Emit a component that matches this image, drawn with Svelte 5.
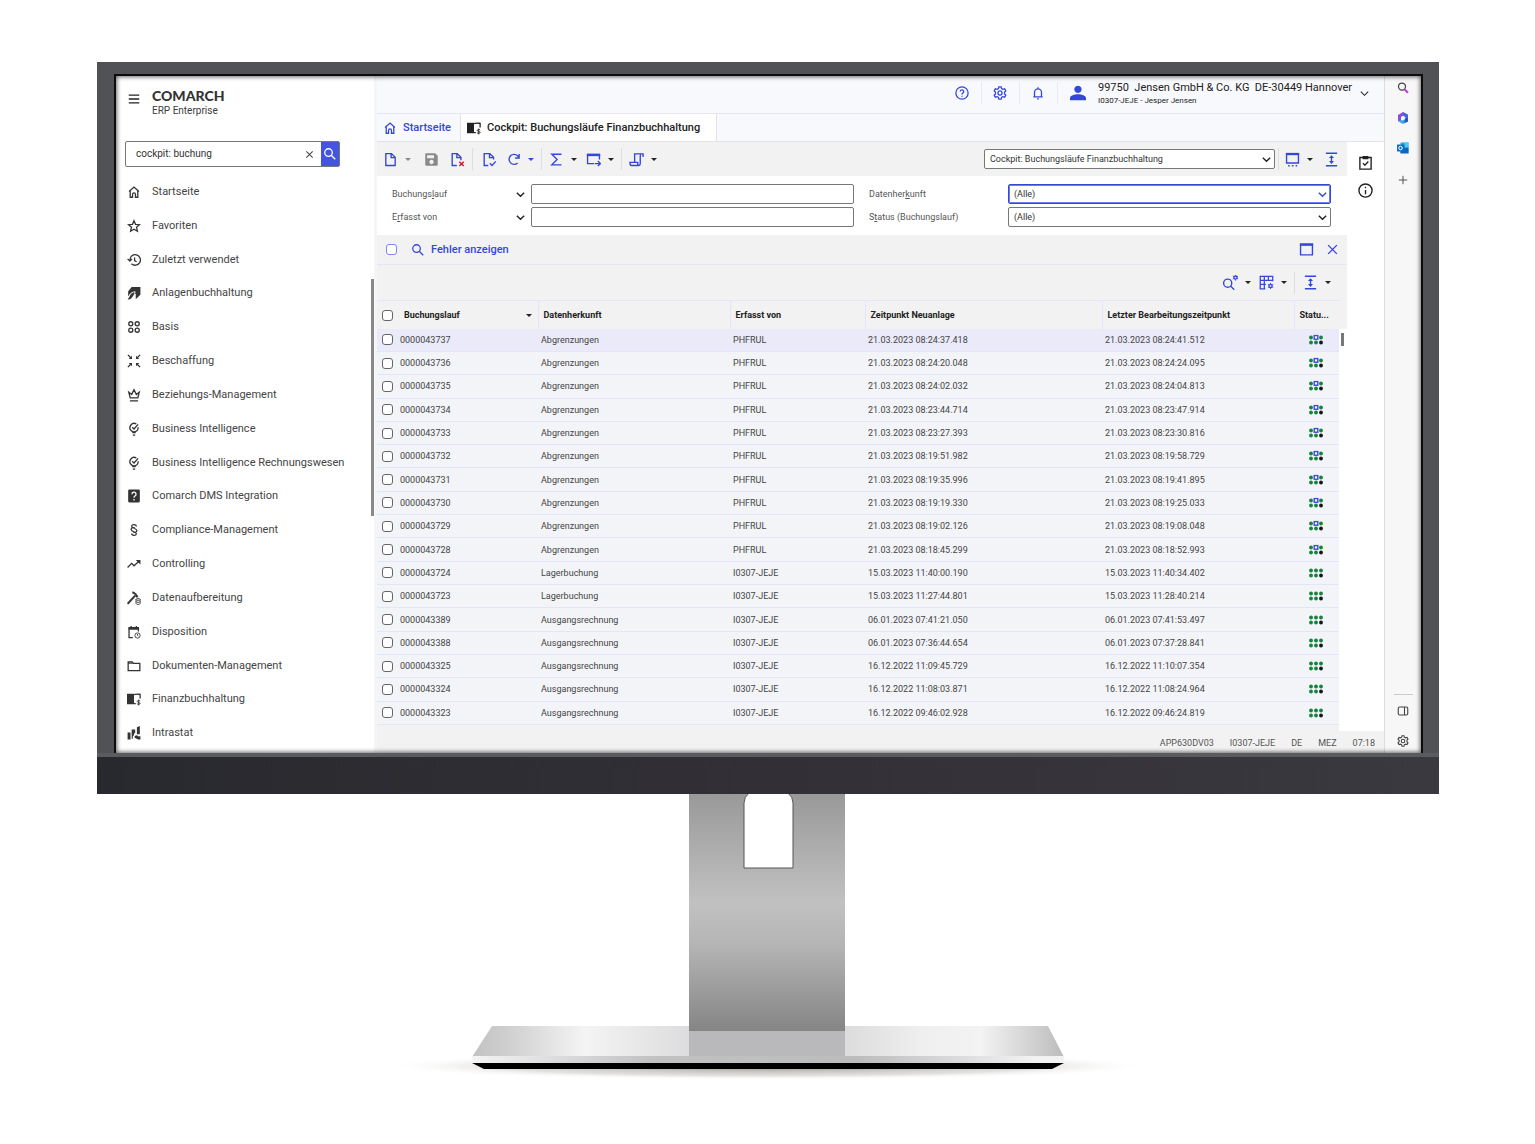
<script lang="ts">
  const icons: Record<string, string> = {
    burger: '<path d="M3 5.500h18M3 12h18M3 18.500h18"/>',
    close: '<path d="M5 5l14 14M19 5L5 19"/>',
    search: '<circle cx="9.500" cy="9.500" r="6.500"/><path d="M14.500 14.500L21 21"/>',
    home: '<path d="M3.500 11L12 3.500l8.500 7.500M5.500 10v11h4v-5a2.500 2.500 0 0 1 5 0v5h4V10"/>',
    star: '<path d="M12 3l2.600 6.200 6.900.6-5.200 4.500 1.600 6.700-5.900-3.600L6.100 21l1.600-6.700-5.200-4.500 6.900-.6z"/>',
    history: '<path d="M5 12a9 9 0 1 1 2.600 6.300M1 10l4 4 3.500-4M13 7.500V13l3.500 2"/>',
    assets: '<path fill="currentColor" stroke="none" d="M8 1.500h15V15l-8 7.500v-9h-2c-1.500 4-4 6.500-8 9l-4 .5 3-4c1-3 3-5 5-6.500-2.500 1-5 2.500-7 5V9z"/><path stroke="#fff" stroke-width="1.500" d="M4 15c3-3 6-5 10-5-1 5-3 8-6 11"/>',
    basis: '<circle cx="6.500" cy="6.500" r="3.500"/><circle cx="17.500" cy="6.500" r="3.500"/><circle cx="6.500" cy="17.500" r="3.500"/><circle cx="17.500" cy="17.500" r="3.500"/>',
    inward: '<path d="M1.500 1.500l5 5M22.500 1.500l-5 5M1.500 22.500l5-5M22.500 22.500l-5-5"/><path fill="currentColor" stroke="none" d="M8.500 3v5.500H3zM15.500 3v5.500H21zM8.500 21v-5.500H3zM15.500 21v-5.500H21z"/>',
    crown: '<path d="M5.500 17L3 7l5 4 4-8 4 8 5-4-2.500 10zM5 22h14"/>',
    bulb: '<path d="M16 3.500A7.200 7.200 0 1 0 16.500 15.500 7 7 0 0 0 19 9M9 9l3 3 7-8M9 18h6M10 22.500h4"/>',
    dms: '<path fill="currentColor" stroke="none" d="M4 1h16a2 2 0 0 1 2 2v18a2 2 0 0 1-2 2H4a2 2 0 0 1-2-2V3a2 2 0 0 1 2-2z"/><path stroke="#fff" d="M8.500 9a3.500 3.500 0 1 1 5.200 3c-1.200.8-1.700 1.300-1.700 3M12 17v2.500"/>',
    section: '<path d="M16 6c0-4-8-4-8-.5 0 3.500 9 3.500 9 7.500 0 3.500-5 3.500-6.500 2.500M8 18c0 4 8 4 8 .5 0-3.500-9-3.500-9-7.500 0-3.500 5-3.500 6.500-2.500"/>',
    trend: '<path d="M1 18l7-7 4 4 9-8"/><path fill="currentColor" stroke="none" d="M15 5h8v8z"/>',
    hammer: '<path stroke-width="3.500" d="M1 22L14 8"/><path stroke-width="3.500" d="M9 2.500c4 0 6 2 9 8.500"/><g stroke-width="1.500"><ellipse cx="19" cy="14.500" rx="3.500" ry="1.500"/><path d="M15.500 14.500v7c0 2 7 2 7 0v-7M15.500 18c0 2 7 2 7 0"/></g>',
    calendar: '<path d="M10 21.500H3.500V4.500h16V11M7 1.500v3M16 1.500v3"/><path fill="currentColor" d="M4 5h15v2H4z"/><g stroke-width="1.500"><circle cx="18" cy="18" r="4.500"/><path d="M18 15.500V18l1.500 1"/></g>',
    folder: '<path d="M2 5h7l2 2.500h11v12.500H2z"/><path d="M2 7h8"/>',
    ledger: '<path fill="currentColor" stroke="none" d="M0 3h12v18H0z"/><path d="M12 20h3M12 5c2-2 5-1.500 10.500-1V11"/><path stroke-width="1.500" d="M22.500 15.500c-1.500-1.500-5-1-5 .8s5 1.400 5 3.200-3.500 2.500-5.500.5M20 13v10"/>',
    intrastat: '<path fill="currentColor" stroke="none" d="M1 11h5v12H1zM8 6h6v6l-2 1v3l-2 1v5H8zM17 2l5-2v14h-5zM13 17l4-1 3 2 3-1v6h-4l-4-2-2-1z"/>',
    doc: '<path d="M4.500 2.500h9l6 6v13h-15zM13 2.500V9h6.500"/>',
    save: '<path fill="currentColor" stroke="none" fill-rule="evenodd" d="M3 2h15l4 4v14a2 2 0 0 1-2 2H4a2 2 0 0 1-2-2V4a2 2 0 0 1 1-2zM5 5v5h11V5zM12 12.500a3.500 3.500 0 1 0 .1 0z"/>',
    docDelete: '<path d="M11 21.500H3.500v-19h8l6 6V13M11 2.500V9h6.500"/><path stroke="#d8102c" d="M15 15.500l7 7M22 15.500l-7 7"/>',
    docCheck: '<path d="M10 21.500H3.500v-19h9l6 6V12M12 2.500V9h6.500"/><path d="M12.500 18l3.500 3.500 6-6.500"/>',
    refresh: '<path d="M18.500 17.500a8 8 0 1 1 0-11.500l2 2M21 3v6.500h-6.500"/>',
    sum: '<path d="M20 3.500H4.500L13 12l-8.500 8.500H20"/>',
    windowArrow: '<path d="M13 18.500H2.500V4h19v8"/><path fill="currentColor" d="M2.500 4h19v1.500h-19z"/><path d="M14 18.500h8M19 14.500l4 4-4 4"/>',
    script: '<path d="M22.500 8V3H9v13M22.500 3H20c-1.500 0-2 1-2 3v12c0 2-1 3.500-3 3.500H4c-1.500 0-2.500-1-2.500-5H14v5"/>',
    windowDots: '<path d="M2.500 2.500h19v15h-19z"/><path fill="currentColor" d="M2.500 2.500h19v1.500h-19z"/><path d="M5 22h2.500M11 22h2.500M17 22h2.500"/>',
    window: '<path d="M2.500 3.500h19v17h-19z"/><path fill="currentColor" d="M2.500 3.500h19v1.500h-19z"/>',
    expand: '<path d="M3 2h18M3 22h18M12 7v10"/><path fill="currentColor" stroke="none" d="M8 9.500l4-4.500 4 4.500zM8 14.500l4 4.500 4-4.500z"/>',
    searchGear: '<circle cx="7.500" cy="13" r="6.500"/><path d="M12 17.500l6 6"/><circle cx="20" cy="4" r="2.500"/><path stroke-width="1.500" d="M20 -1v2M20 7v2M15.700 1.500l1.700 1M22.600 5.500l1.700 1M15.700 6.500l1.700-1M22.600 2.500l1.700-1"/>',
    tableGear: '<path stroke-width="2" d="M10 22H2V2h20v8M2 8.500h20M2 15h9M8.500 2v20M15 2v7"/><circle cx="18.500" cy="17.500" r="2.500"/><path stroke-width="1.500" d="M18.500 12.500v2M18.500 20.500v2M14.200 15l1.700 1M21.100 19l1.700 1M14.200 20l1.700-1M21.100 16l1.700-1"/>',
    help: '<circle cx="12" cy="12" r="10.500"/><path d="M9 9.500a3 3 0 1 1 4.400 2.700c-1 .7-1.400 1.200-1.400 2.300M12 16.500v2"/>',
    gear: '<path d="M10 1.500h4l.7 3 2.200 1.200 3.100-.9 2 3.500-2.200 2.200v3l2.200 2.200-2 3.500-3.100-.9-2.200 1.200-.7 3h-4l-.7-3-2.200-1.200-3.100.9-2-3.500 2.200-2.200v-3L2 8.300l2-3.500 3.100.9 2.200-1.200z"/><circle cx="12" cy="12" r="3.500"/>',
    bell: '<path d="M4 18.500h16M6 18.500V11a6 6 0 0 1 12 0v7.500M12 2v3"/><path d="M10.500 22h3"/>',
    user: '<path fill="currentColor" stroke="none" d="M12 1a5.500 5.500 0 1 1-.1 0zM0 23v-3c0-4.500 7-6 12-6s12 1.500 12 6v3z"/>',
    chevron: '<path d="M4 8l8 8 8-8"/>',
    clipboard: '<path d="M3 4h18v18.500H3zM8 13l3 3.500 5.500-6"/><path fill="currentColor" d="M8.500 2.500h7v3h-7z"/>',
    info: '<circle cx="12" cy="12" r="10.500"/><path d="M12 11v7M12 6v2.500"/>',
    plus: '<path d="M12 2v20M2 12h20"/>',
    panel: '<rect x="2.500" y="4" width="19" height="16" rx="3"/><path d="M15 4v16"/>',
  };

  const menu = [
    ["home", "Startseite"],
    ["star", "Favoriten"],
    ["history", "Zuletzt verwendet"],
    ["assets", "Anlagenbuchhaltung"],
    ["basis", "Basis"],
    ["inward", "Beschaffung"],
    ["crown", "Beziehungs-Management"],
    ["bulb", "Business Intelligence"],
    ["bulb", "Business Intelligence Rechnungswesen"],
    ["dms", "Comarch DMS Integration"],
    ["section", "Compliance-Management"],
    ["trend", "Controlling"],
    ["hammer", "Datenaufbereitung"],
    ["calendar", "Disposition"],
    ["folder", "Dokumenten-Management"],
    ["ledger", "Finanzbuchhaltung"],
    ["intrastat", "Intrastat"],
  ];

  const rows = [
    ["0000043737", "Abgrenzungen", "PHFRUL", "21.03.2023 08:24:37.418", "21.03.2023 08:24:41.512"],
    ["0000043736", "Abgrenzungen", "PHFRUL", "21.03.2023 08:24:20.048", "21.03.2023 08:24:24.095"],
    ["0000043735", "Abgrenzungen", "PHFRUL", "21.03.2023 08:24:02.032", "21.03.2023 08:24:04.813"],
    ["0000043734", "Abgrenzungen", "PHFRUL", "21.03.2023 08:23:44.714", "21.03.2023 08:23:47.914"],
    ["0000043733", "Abgrenzungen", "PHFRUL", "21.03.2023 08:23:27.393", "21.03.2023 08:23:30.816"],
    ["0000043732", "Abgrenzungen", "PHFRUL", "21.03.2023 08:19:51.982", "21.03.2023 08:19:58.729"],
    ["0000043731", "Abgrenzungen", "PHFRUL", "21.03.2023 08:19:35.996", "21.03.2023 08:19:41.895"],
    ["0000043730", "Abgrenzungen", "PHFRUL", "21.03.2023 08:19:19.330", "21.03.2023 08:19:25.033"],
    ["0000043729", "Abgrenzungen", "PHFRUL", "21.03.2023 08:19:02.126", "21.03.2023 08:19:08.048"],
    ["0000043728", "Abgrenzungen", "PHFRUL", "21.03.2023 08:18:45.299", "21.03.2023 08:18:52.993"],
    ["0000043724", "Lagerbuchung", "I0307-JEJE", "15.03.2023 11:40:00.190", "15.03.2023 11:40:34.402"],
    ["0000043723", "Lagerbuchung", "I0307-JEJE", "15.03.2023 11:27:44.801", "15.03.2023 11:28:40.214"],
    ["0000043389", "Ausgangsrechnung", "I0307-JEJE", "06.01.2023 07:41:21.050", "06.01.2023 07:41:53.497"],
    ["0000043388", "Ausgangsrechnung", "I0307-JEJE", "06.01.2023 07:36:44.654", "06.01.2023 07:37:28.841"],
    ["0000043325", "Ausgangsrechnung", "I0307-JEJE", "16.12.2022 11:09:45.729", "16.12.2022 11:10:07.354"],
    ["0000043324", "Ausgangsrechnung", "I0307-JEJE", "16.12.2022 11:08:03.871", "16.12.2022 11:08:24.964"],
    ["0000043323", "Ausgangsrechnung", "I0307-JEJE", "16.12.2022 09:46:02.928", "16.12.2022 09:46:24.819"],
  ];

  let query = $state("cockpit: buchung");
  let selected = $state("0000043737");
</script>

{#snippet icon(name: string)}
  <svg class="icon" viewBox="0 0 24 24" stroke-width="2.200" aria-hidden="true">{@html icons[name]}</svg>
{/snippet}

{#snippet caret(label: string)}
  <button type="button" class="caret" aria-label={label}></button>
{/snippet}

{#snippet tool(name: string, label: string)}
  <button type="button" class="tool" aria-label={label}>{@render icon(name)}</button>
{/snippet}

<div class="page">
  <div class="monitor">
    <div class="screen">
      <aside class="sidebar">
        <div class="brand">
          <button type="button" class="burger" aria-label="Menü">{@render icon("burger")}</button>
          <div>
            <div class="logo">COMARCH</div>
            <div class="product">ERP Enterprise</div>
          </div>
        </div>
        <form class="search" onsubmit={(e) => e.preventDefault()}>
          <input type="text" aria-label="Suche" bind:value={query} />
          <button type="button" class="clear" aria-label="Leeren" onclick={() => (query = "")}>
            {@render icon("close")}
          </button>
          <button type="submit" class="go" aria-label="Suchen">{@render icon("search")}</button>
        </form>
        <nav class="menu">
          {#each menu as [name, label]}
            <a href="#{name}">{@render icon(name)}<span>{label}</span></a>
          {/each}
        </nav>
        <div class="menu-thumb"></div>
      </aside>

      <main class="app">
        <header class="topbar">
          <button type="button" class="top" aria-label="Hilfe">{@render icon("help")}</button>
          <button type="button" class="top" aria-label="Einstellungen">{@render icon("gear")}</button>
          <button type="button" class="top" aria-label="Meldungen">{@render icon("bell")}</button>
          <button type="button" class="account">
            {@render icon("user")}
            <span class="who">
              <span class="company">99750&nbsp; Jensen GmbH &amp; Co. KG&nbsp; DE-30449 Hannover</span>
              <span class="login">I0307-JEJE - Jesper Jensen</span>
            </span>
            <span class="open">{@render icon("chevron")}</span>
          </button>
        </header>

        <nav class="tabs">
          <a href="#start" class="tab">{@render icon("home")}Startseite</a>
          <a href="#cockpit" class="tab active">{@render icon("ledger")}Cockpit: Buchungsläufe Finanzbuchhaltung</a>
        </nav>

        <div class="work">
          <section class="cockpit">
            <div class="toolbar">
              <div class="group">
                <span class="split">{@render tool("doc", "Neu")}{@render caret("Neu, weitere")}</span>
                {@render tool("save", "Speichern")}
                {@render tool("docDelete", "Löschen")}
              </div>
              <div class="group checks">
                {@render tool("docCheck", "Prüfen")}
                <span class="split">{@render tool("refresh", "Aktualisieren")}{@render caret("Aktualisieren, weitere")}</span>
              </div>
              <div class="group dark">
                <span class="split">{@render tool("sum", "Summe")}{@render caret("Summe, weitere")}</span>
                <span class="split">{@render tool("windowArrow", "Öffnen")}{@render caret("Öffnen, weitere")}</span>
              </div>
              <div class="group dark">
                <span class="split">{@render tool("script", "Skript")}{@render caret("Skript, weitere")}</span>
              </div>
              <div class="select view">
                <select aria-label="Ansicht"><option>Cockpit: Buchungsläufe Finanzbuchhaltung</option></select>
                {@render icon("chevron")}
              </div>
              <div class="group dark last">
                <span class="split">{@render tool("windowDots", "Fenster")}{@render caret("Fenster, weitere")}</span>
                {@render tool("expand", "Höhe anpassen")}
              </div>
            </div>

            <div class="filters">
              <div class="field">
                <label for="run">Buchungs<u>l</u>auf</label>
                <button type="button" class="operator" aria-label="Operator">{@render icon("chevron")}</button>
                <input id="run" type="text" />
              </div>
              <div class="field">
                <label for="origin">Datenher<u>k</u>unft</label>
                <div class="select focus">
                  <select id="origin"><option>(Alle)</option></select>
                  {@render icon("chevron")}
                </div>
              </div>
              <div class="field">
                <label for="author">E<u>r</u>fasst von</label>
                <button type="button" class="operator" aria-label="Operator">{@render icon("chevron")}</button>
                <input id="author" type="text" />
              </div>
              <div class="field">
                <label for="status">S<u>t</u>atus (Buchungslauf)</label>
                <div class="select">
                  <select id="status"><option>(Alle)</option></select>
                  {@render icon("chevron")}
                </div>
              </div>
            </div>

            <div class="errors">
              <input type="checkbox" class="blue" id="errors" />
              <label for="errors">{@render icon("search")}Fehler anzeigen</label>
              <div class="errors-end">
                {@render tool("window", "Maximieren")}
                {@render tool("close", "Schließen")}
              </div>
            </div>

            <div class="table-tools dark">
              <span class="split">{@render tool("searchGear", "Suche")}{@render caret("Suche, weitere")}</span>
              <span class="split">{@render tool("tableGear", "Spalten")}{@render caret("Spalten, weitere")}</span>
              <span class="split divided">{@render tool("expand", "Zeilenhöhe")}{@render caret("Zeilenhöhe, weitere")}</span>
            </div>

            <div class="list">
              <table>
                <colgroup>
                  <col class="c-run" />
                  <col class="c-origin" />
                  <col class="c-author" />
                  <col />
                  <col class="c-origin" />
                  <col class="c-status" />
                </colgroup>
                <thead>
                  <tr>
                    <th>
                      <div class="run">
                        <input type="checkbox" aria-label="Alle auswählen" />
                        <span class="head">Buchungslauf</span>
                        <span class="sort"></span>
                      </div>
                    </th>
                    <th>Datenherkunft</th>
                    <th>Erfasst von</th>
                    <th>Zeitpunkt Neuanlage</th>
                    <th>Letzter Bearbeitungszeitpunkt</th>
                    <th>Statu...</th>
                  </tr>
                </thead>
                <tbody>
                  {#each rows as row}
                    <tr class:selected={row[0] === selected} onclick={() => (selected = row[0])}>
                      <td>
                        <div class="run">
                          <input type="checkbox" aria-label={row[0]} />
                          <span>{row[0]}</span>
                        </div>
                      </td>
                      {#each row.slice(1) as cell}
                        <td>{cell}</td>
                      {/each}
                      <td class="state">
                        <svg viewBox="0 0 14 10" aria-hidden="true">
                          <g fill="#14843c">
                            <circle cx="2" cy="2.500" r="1.900" />
                            {#if row[1] !== "Abgrenzungen"}
                              <circle cx="7" cy="2.500" r="1.900" />
                            {/if}
                            <circle cx="12" cy="2.500" r="1.900" />
                            <circle cx="2" cy="7.500" r="1.900" />
                            <circle cx="7" cy="7.500" r="1.900" />
                          </g>
                          <circle cx="12" cy="7.500" r="1.900" fill="#15151c" />
                          {#if row[1] === "Abgrenzungen"}
                            <rect x="5.200" y="0.600" width="3.600" height="3.600" fill="#fff" stroke="#3b4be0" stroke-width="1.400" />
                          {/if}
                        </svg>
                      </td>
                    </tr>
                  {/each}
                </tbody>
              </table>
              <div class="list-scroll"><div class="list-thumb"></div></div>
            </div>
          </section>

          <div class="side-tools">
            {@render tool("clipboard", "Aufgaben")}
            {@render tool("info", "Info")}
          </div>
        </div>

        <footer class="status">
          <span>APP630DV03</span>
          <span>I0307-JEJE</span>
          <span>DE</span>
          <span>MEZ</span>
          <span>07:18</span>
        </footer>
      </main>

      <aside class="edge">
        <button type="button" aria-label="Suchen">
          <svg class="icon" viewBox="0 0 24 24" stroke-width="2.500" aria-hidden="true">
            <circle cx="10" cy="9" r="7" />
            <path stroke="#c03be0" stroke-width="4" d="M15 14.500l7 7" />
          </svg>
        </button>
        <button type="button" aria-label="Microsoft 365">
          <svg viewBox="0 0 24 24" aria-hidden="true">
            <path fill="#4b62dc" d="M12 0l10 5v7l-6 1-1-4-4-2z" />
            <path fill="#8a4fd8" d="M12 0L2 6v12l6 3V10l5-3z" />
            <path fill="#38a8e8" d="M2 18l10 6 10-5v-8l-6-1v4l-5 3-4-1z" />
            <path fill="#3050c4" d="M16 13l6-3v9l-7 3z" />
            <circle cx="12" cy="12" r="3.500" fill="#f7f7f7" />
          </svg>
        </button>
        <button type="button" aria-label="Outlook">
          <svg viewBox="0 0 24 24" aria-hidden="true">
            <path fill="#2aa3e6" d="M7 1h16v21H7z" />
            <path fill="#52c8f5" d="M15 1h8v10h-8z" />
            <path fill="#0f66b8" d="M7 13l16-2v12H7z" />
            <rect y="5" width="15" height="14" rx="1" fill="#0b6fc6" />
            <circle cx="7" cy="12" r="3.500" fill="none" stroke="#fff" stroke-width="2" />
          </svg>
        </button>
        <button type="button" class="add" aria-label="Hinzufügen">{@render icon("plus")}</button>
        <div class="edge-end">
          <button type="button" aria-label="Seitenleiste">{@render icon("panel")}</button>
          <button type="button" aria-label="Einstellungen">{@render icon("gear")}</button>
        </div>
      </aside>
    </div>
    <div class="chin"></div>
  </div>

  <svg class="stand" viewBox="0 0 780 300" aria-hidden="true">
    <defs>
      <linearGradient id="neck" x1="0" y1="0" x2="0" y2="1">
        <stop offset="0" stop-color="#999" />
        <stop offset="0.460" stop-color="#c1c1c1" />
        <stop offset="0.640" stop-color="#b4b4b4" />
        <stop offset="1" stop-color="#858585" />
      </linearGradient>
      <linearGradient id="plate">
        <stop offset="0" stop-color="#c2c2c2" />
        <stop offset="0.060" stop-color="#cfcfcf" />
        <stop offset="0.190" stop-color="#f4f4f4" />
        <stop offset="0.370" stop-color="#dcdcde" />
        <stop offset="0.630" stop-color="#dcdcdc" />
        <stop offset="0.760" stop-color="#efefef" />
        <stop offset="0.860" stop-color="#f3f3f3" />
        <stop offset="1" stop-color="#bcbcbc" />
      </linearGradient>
      <linearGradient id="rim">
        <stop offset="0" stop-color="#f4f4f4" />
        <stop offset="0.300" stop-color="#c2c2c2" />
        <stop offset="0.650" stop-color="#bcbcbc" />
        <stop offset="0.950" stop-color="#f2f2f2" />
      </linearGradient>
      <radialGradient id="shade">
        <stop offset="0" stop-color="#8a867c" stop-opacity="0.900" />
        <stop offset="0.700" stop-color="#b8b5ae" stop-opacity="0.400" />
        <stop offset="1" stop-color="#fff" stop-opacity="0" />
      </radialGradient>
    </defs>
    <ellipse cx="390" cy="272" rx="385" ry="14" fill="url(#shade)" />
    <path fill="url(#plate)" d="M114 232h556l16 31H94z" />
    <path fill="#b9b9bb" d="M311 236h156v26H311z" />
    <path fill="url(#neck)" d="M311 0h156v237H311z" />
    <path fill="#fff" stroke="#555" d="M371 -1q-5 4-5 10v65h49V9q0-6-5-10z" />
    <path fill="url(#rim)" d="M94 262h592v7H94z" />
    <path d="M94 269h592l-12 6H106z" />
  </svg>
</div>

<style>
  :global(body) {
    background: #fff;
  }

  .page {
    padding: 62px 96px 0 97px;
    font-family: Roboto, "Liberation Sans", sans-serif;
    font-size: 11px;
    line-height: 12px;
    color: #444;
  }

  button {
    display: flex;
    align-items: center;
    justify-content: center;
    padding: 0;
    border: 0;
    background: none;
    color: inherit;
    font: inherit;
    cursor: pointer;
  }

  input,
  select {
    box-sizing: border-box;
    margin: 0;
    font: inherit;
    font-size: 10px;
    color: #333;
  }

  a {
    color: inherit;
    text-decoration: none;
  }

  .icon {
    display: block;
    flex: none;
    width: 14px;
    height: 14px;
    fill: none;
    stroke: currentColor;
  }

  .monitor {
    display: flex;
    flex-direction: column;
    box-sizing: border-box;
    aspect-ratio: 11 / 6;
    padding: 12px 0 0;
    background: #515256;
  }

  .screen {
    position: relative;
    display: flex;
    flex: 1;
    margin: 0 16px 0 17px;
    border: 2px solid #0c0c0e;
    border-bottom: 0;
    background: #fff;
  }

  .screen::after {
    content: "";
    position: absolute;
    inset: 0;
    box-shadow: inset 0 0 4px 1px rgba(0, 0, 0, 0.6);
    pointer-events: none;
  }

  .chin {
    height: 37px;
    border-top: 4px solid #5a5b5f;
    background: linear-gradient(90deg, #28292e, #323036 50%, #3a393f);
  }

  .sidebar {
    position: relative;
    display: flex;
    flex-direction: column;
    box-sizing: border-box;
    width: 261px;
    padding-bottom: 3px;
    border-right: 3px solid #f5f5f6;
  }

  .brand {
    display: flex;
    gap: 11px;
    padding: 12px 0 0 11px;
    color: #3c3c3c;
  }

  .burger {
    height: 22px;
    color: #222;
  }

  .logo {
    font-family: Lato, Roboto, sans-serif;
    font-size: 14px;
    font-weight: 900;
    line-height: 16px;
    color: #333;
  }

  .product {
    font-size: 10px;
    line-height: 14px;
  }

  .search {
    display: flex;
    margin: 23px 34px 8px 9px;
    height: 26px;
    border: 1px solid #777;
    border-radius: 2px;
    box-sizing: border-box;
  }

  .search input {
    flex: 1;
    min-width: 0;
    padding: 0 10px;
    border: 0;
    background: none;
    outline: 0;
  }

  .clear {
    width: 24px;
  }

  .clear .icon {
    width: 11px;
    height: 11px;
  }

  .go {
    width: 18px;
    background: #4355e0;
    color: #fff;
  }

  .menu {
    display: flex;
    flex: 1;
    flex-direction: column;
  }

  .menu a {
    display: flex;
    flex: 1;
    align-items: center;
    gap: 11px;
    padding-left: 11px;
  }

  .menu .icon {
    color: #333;
  }

  .menu-thumb {
    position: absolute;
    top: 30%;
    right: 0;
    width: 3px;
    height: 35%;
    background: #8a8a8a;
  }

  .app {
    display: flex;
    flex: 1;
    flex-direction: column;
    min-width: 0;
    background: #f8f9fc;
  }

  .topbar {
    display: flex;
    align-items: center;
    justify-content: flex-end;
    box-sizing: border-box;
    height: 38px;
    padding-bottom: 3px;
    border-bottom: 1px solid #e4e4fb;
    color: #3546dc;
  }

  .top {
    width: 38px;
    height: 22px;
    border-right: 1px solid #e9e9f4;
  }

  .account {
    gap: 12px;
    padding: 0 14px 0 12px;
    text-align: left;
  }

  .account > .icon {
    width: 16px;
    height: 16px;
  }

  .who {
    margin-right: -5px;
  }

  .who span {
    display: block;
    color: #222;
  }

  .company {
    font-size: 11px;
    line-height: 15px;
  }

  .login {
    font-size: 8px;
  }

  .open {
    color: #222;
  }

  .open .icon {
    width: 11px;
    height: 11px;
  }

  .tabs {
    display: flex;
    height: 27px;
    border-bottom: 1px solid #e2e2e2;
  }

  .tab {
    display: flex;
    align-items: center;
    gap: 6px;
    padding: 0 9px 0 6px;
    border-right: 1px solid #e2e2e8;
    color: #3546dc;
    font-weight: 500;
  }

  .tab.active {
    padding-right: 16px;
    background: #fff;
    color: #222;
  }

  .work {
    display: flex;
    flex: 1;
    background: #fff;
  }

  .cockpit {
    display: flex;
    flex: 1;
    flex-direction: column;
    min-width: 0;
  }

  .toolbar,
  .errors,
  .table-tools {
    display: flex;
    align-items: center;
    background: #f2f2f2;
  }

  .toolbar {
    height: 34px;
    color: #3546dc;
  }

  .group {
    display: flex;
    align-items: center;
    gap: 10px;
    height: 22px;
    padding: 0 7px 0 5px;
  }

  .group + .group,
  .last,
  .divided {
    border-left: 1px solid #dedee2;
  }

  .group + .group {
    padding: 0 5px 0 6px;
  }

  .group.checks {
    gap: 8px;
    padding-left: 8px;
  }

  .split {
    display: flex;
    align-items: center;
    gap: 5px;
  }

  .group .split + .split {
    margin-left: -4px;
  }

  .tool {
    width: 16px;
    height: 20px;
  }

  .tool .icon {
    width: 15px;
    height: 15px;
  }

  .tool[aria-label="Speichern"] {
    color: #8a8a8a;
  }

  .caret {
    width: 10px;
    height: 16px;
  }

  .caret::before,
  .sort {
    content: "";
    border: 3px solid transparent;
    border-top-color: currentColor;
    border-bottom: 0;
  }

  .dark .caret {
    color: #222;
  }

  [aria-label="Neu, weitere"] {
    color: #888;
  }

  .select {
    position: relative;
    flex: 1;
    color: #222;
  }

  .view {
    flex: 0 0 30%;
    margin: 0 3px 0 auto;
  }

  .select select,
  .field input {
    display: block;
    width: 100%;
    height: 20px;
    padding: 0 5px;
    border: 1px solid #777;
    border-radius: 2px;
    background: #fff;
    appearance: none;
    outline: 0;
  }

  .select select {
    font-size: 9px;
  }

  .select .icon {
    position: absolute;
    top: 5px;
    right: 3px;
    width: 11px;
    height: 11px;
    pointer-events: none;
  }

  .select.focus {
    color: #3546dc;
  }

  .select.focus select {
    border-color: #3546dc;
    box-shadow: inset 0 0 0 1px #6f7cee;
  }

  .group.last {
    gap: 8px;
    padding: 0 8px 0 5px;
  }

  .filters {
    display: grid;
    grid-template-columns: 1fr 1fr;
    gap: 3px 15px;
    padding: 8px 16px 8px 15px;
    background: #fff;
  }

  .field {
    display: flex;
    align-items: center;
  }

  .field label {
    flex: 0 0 139px;
    color: #555;
    font-size: 9px;
  }

  .operator + input {
    flex: 1;
  }

  .field:has(.operator) label {
    flex-basis: 123px;
  }

  .operator {
    width: 16px;
    color: #222;
  }

  .operator .icon {
    width: 11px;
    height: 11px;
    margin-right: 6px;
  }

  .operator .icon,
  .select .icon {
    stroke-width: 3;
  }

  .errors {
    height: 29px;
    padding: 0 7px 0 9px;
    border-bottom: 1px solid #e4e4fb;
    color: #3546dc;
    font-weight: 500;
  }

  .errors label {
    display: flex;
    align-items: center;
    gap: 6px;
    margin-left: 14px;
  }

  .errors-end {
    display: flex;
    gap: 10px;
    margin-left: auto;
  }

  input[type="checkbox"] {
    flex: none;
    width: 11px;
    height: 11px;
    border: 1px solid #666;
    border-radius: 3px;
    background: #fff;
    appearance: none;
  }

  input[type="checkbox"].blue {
    border-color: #7f86ee;
  }

  .table-tools {
    justify-content: flex-end;
    gap: 5px;
    height: 35px;
    padding-right: 14px;
    color: #3546dc;
  }

  .divided {
    height: 22px;
    padding-left: 7px;
  }

  .list {
    display: flex;
    flex: 1;
    padding-bottom: 6px;
    background: #f2f2f2;
  }

  table {
    flex: 1;
    width: 100%;
    border-collapse: collapse;
    table-layout: fixed;
    font-size: 9px;
  }

  .c-run {
    width: 161px;
  }

  .c-origin {
    width: 192px;
  }

  .c-author {
    width: 135px;
  }

  .c-status {
    width: 45px;
  }

  th,
  td {
    padding: 0 0 0 3px;
    text-align: left;
    white-space: nowrap;
  }

  th {
    height: 28px;
    padding-left: 5px;
    border-top: 1px solid #e4e4fb;
    border-right: 1px solid #e4e4fb;
    color: #222;
    font-weight: 700;
  }

  th:last-child {
    border-right: 0;
  }

  tbody tr {
    border-bottom: 1px solid #e4e4fb;
    background: #f3f4f8;
  }

  tbody tr.selected {
    background: #eaeaf8;
  }

  .run {
    display: flex;
    align-items: center;
    gap: 7px;
    padding-left: 2px;
  }

  th .run {
    gap: 11px;
    padding-left: 0;
  }

  .sort {
    margin: 0 6px 0 auto;
  }

  .state svg {
    display: block;
    width: 14px;
    height: 10px;
    margin-left: 12px;
    overflow: visible;
  }

  .list-scroll {
    width: 8px;
    margin: 29px 0 -6px;
    background: #fff;
  }

  .list-thumb {
    width: 3px;
    height: 13px;
    margin: 4px 0 0 2px;
    background: #777;
  }

  .side-tools {
    display: flex;
    flex-direction: column;
    align-items: center;
    gap: 8px;
    width: 37px;
    padding-top: 10px;
    color: #222;
  }

  .status {
    display: flex;
    align-items: center;
    justify-content: flex-end;
    gap: 16px;
    box-sizing: border-box;
    height: 22px;
    padding: 2px 9px 0 0;
    background: #f2f2f2;
    color: #555;
    font-size: 9px;
  }

  .edge {
    display: flex;
    flex-direction: column;
    align-items: center;
    gap: 18px;
    box-sizing: border-box;
    width: 37px;
    padding: 6px 0;
    border-left: 1px solid #dcdcdc;
    background: #f7f7f7;
    color: #444;
  }

  .edge svg {
    width: 12px;
    height: 12px;
  }

  .add {
    margin-top: 3px;
  }

  .add .icon {
    width: 10px;
    height: 10px;
  }

  .edge-end {
    display: flex;
    flex-direction: column;
    align-items: center;
    gap: 18px;
    width: 19px;
    margin-top: auto;
    padding-top: 10px;
    border-top: 1px solid #ccc;
  }

  .stand {
    display: block;
    width: 780px;
    max-width: 100%;
    margin: 0 auto;
  }
</style>
